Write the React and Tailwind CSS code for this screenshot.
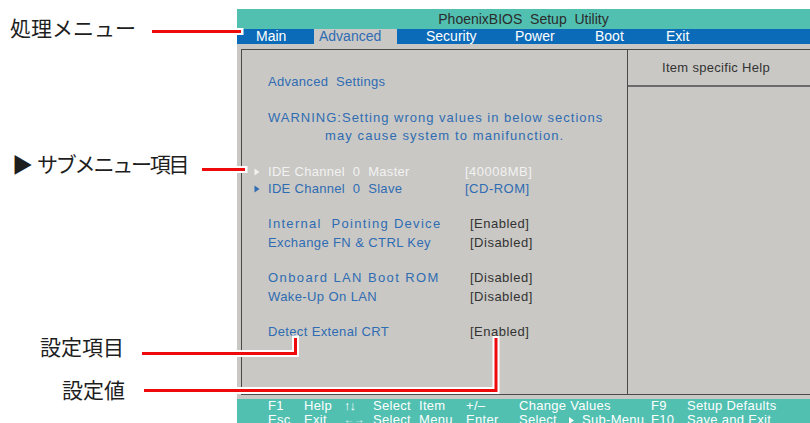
import React from 'react';

// Row in the Advanced settings list: marker column, label column, value
function Row({ className, marker, label, value, labelClass, valueClass }) {
  return (
    <div className={`flex ${className}`}>
      <span className="w-[14px] shrink-0 flex items-center">{marker}</span>
      <span className={labelClass}>{label}</span>
      <span className={valueClass}>{value}</span>
    </div>
  );
}

function Tri({ color }) {
  return (
    <svg width="6" height="8" viewBox="0 0 6 8">
      <polygon points="0.5,0.5 5.5,4 0.5,7.5" fill={color} />
    </svg>
  );
}

function Callouts() {
  return (
    <svg className="absolute inset-0 pointer-events-none" width="810" height="423">
      {/* white halo under the red leader lines */}
      <g stroke="#ffffff" strokeWidth="7" fill="none" strokeLinecap="square" strokeLinejoin="miter">
        <polyline points="152,31.5 240,31.5" />
        <polyline points="202,169.5 244,169.5" />
        <polyline points="142,353.5 295.5,353.5 295.5,339" />
        <polyline points="144,390.5 496,390.5 496,339.5" />
      </g>
      <g stroke="#ee0a0a" strokeWidth="3" fill="none" strokeLinejoin="miter">
        <polyline points="152,31.5 241,31.5" />
        <polyline points="202,169.5 245,169.5" />
        <polyline points="142,353.5 295.5,353.5 295.5,338" />
        <polyline points="144,390.5 496,390.5 496,338" />
      </g>
    </svg>
  );
}

export default function App() {
  const blue = 'text-[#2f6cb3]';

  return (
    <div className="relative w-[810px] h-[423px] overflow-hidden bg-white font-['Liberation_Sans',Arial,sans-serif]">
      <div className="flex h-full">
        {/* left column holds the annotation labels */}
        <div className="w-[237px] shrink-0" />

        {/* BIOS screen */}
        <div className="flex-1 pt-[9px] flex flex-col min-w-0">
          <div className="h-[20px] bg-[#51c0b1] text-[#2b2b2b] text-[14px] leading-[20px] text-center whitespace-pre">
            PhoenixBIOS  Setup  Utility
          </div>

          <div className="h-[15px] bg-[#0b6bb8] flex text-[14px] leading-[15px] text-white pl-[19px]">
            <span className="w-[58px]">Main</span>
            <span className="w-[83px] pl-[5px] bg-[#c9c8c4] text-[#2f6cb3]">Advanced</span>
            <span className="w-[89px] ml-[29px]">Security</span>
            <span className="w-[80px]">Power</span>
            <span className="w-[71px]">Boot</span>
            <span>Exit</span>
          </div>

          <div className="h-[355px] bg-[#c9c8c4] pt-[5px] pl-[4px] pb-[4px] flex">
            <div className="flex-1 flex border-l border-t border-b border-[#4a4a4a]">
              {/* main settings */}
              <div className="w-[386px] shrink-0 border-r border-[#4a4a4a] pl-[12px] pt-[23px] text-[13px] whitespace-pre">
                <Row
                  className="leading-[18px]"
                  label="Advanced  Settings"
                  labelClass={`${blue} tracking-[0.3px]`}
                />
                <div className={`mt-[18px] pl-[14px] leading-[18px] tracking-[1px] ${blue}`}>
                  WARNING:Setting wrong values in below sections
                </div>
                <div className={`pl-[71px] leading-[18px] tracking-[1.1px] ${blue}`}>
                  may cause system to manifunction.
                </div>

                <Row
                  className="mt-[18px] leading-[17px]"
                  marker={<Tri color="#f2f2f2" />}
                  label="IDE Channel  0  Master"
                  labelClass="w-[197px] text-[#f2f2f2] tracking-[0.3px]"
                  value="[40008MB]"
                  valueClass="text-[#f2f2f2] tracking-[0.5px]"
                />
                <Row
                  className="leading-[17px]"
                  marker={<Tri color="#2f6cb3" />}
                  label="IDE Channel  0  Slave"
                  labelClass={`w-[197px] ${blue} tracking-[0.3px]`}
                  value="[CD-ROM]"
                  valueClass={`${blue} tracking-[0.5px]`}
                />

                <Row
                  className="mt-[17px] leading-[19px]"
                  label="Internal  Pointing Device"
                  labelClass={`w-[202px] ${blue} tracking-[1.3px]`}
                  value="[Enabled]"
                  valueClass="text-[#333333] tracking-[0.5px]"
                />
                <Row
                  className="leading-[19px]"
                  label="Exchange FN & CTRL Key"
                  labelClass={`w-[202px] ${blue} tracking-[0.4px]`}
                  value="[Disabled]"
                  valueClass="text-[#333333] tracking-[0.5px]"
                />

                <Row
                  className="mt-[16px] leading-[19px]"
                  label="Onboard LAN Boot ROM"
                  labelClass={`w-[202px] ${blue} tracking-[1.4px]`}
                  value="[Disabled]"
                  valueClass="text-[#333333] tracking-[0.5px]"
                />
                <Row
                  className="leading-[19px]"
                  label="Wake-Up On LAN"
                  labelClass={`w-[202px] ${blue} tracking-[0.4px]`}
                  value="[Disabled]"
                  valueClass="text-[#333333] tracking-[0.5px]"
                />

                <Row
                  className="mt-[17px] leading-[18px]"
                  label="Detect Extenal CRT"
                  labelClass={`w-[202px] ${blue} tracking-[0.35px]`}
                  value="[Enabled]"
                  valueClass="text-[#333333] tracking-[0.5px]"
                />
              </div>

              {/* help pane */}
              <div className="flex-1 flex flex-col">
                <div className="h-[37px] border-b-2 border-[#6b6b6b] flex items-center justify-center pr-[6px] text-[13px] tracking-[0.3px] text-[#333333]">
                  Item specific Help
                </div>
              </div>
            </div>
          </div>

          <div className="h-[24px] bg-[#51c0b1] overflow-hidden text-white text-[13px] leading-[14px] tracking-[0.3px] whitespace-nowrap">
            <div className="grid grid-cols-[36px_40px_29px_46px_47px_53px_132px_36px_1fr] pl-[31px]">
              <span>F1</span>
              <span>Help</span>
              <span className="font-bold text-[13px] tracking-[-1px]">↑↓</span>
              <span>Select</span>
              <span>Item</span>
              <span>+/–</span>
              <span>Change Values</span>
              <span>F9</span>
              <span>Setup Defaults</span>

              <span>Esc</span>
              <span>Exit</span>
              <span className="font-bold text-[10px]">←→</span>
              <span>Select</span>
              <span>Menu</span>
              <span>Enter</span>
              <span className="flex items-center">
                <span className="w-[50px]">Select</span>
                <span className="w-[13px] flex items-center">
                  <svg width="5" height="7" viewBox="0 0 5 7">
                    <polygon points="0,0 5,3.5 0,7" fill="#ffffff" />
                  </svg>
                </span>
                <span>Sub-Menu</span>
              </span>
              <span>F10</span>
              <span>Save and Exit</span>
            </div>
          </div>
        </div>
      </div>

      {/* annotation labels and leader lines */}
      <Callouts />
      <div className="absolute left-[10px] top-[17px] text-[21px] leading-none text-[#1e1e1e] font-['Noto_Sans_CJK_JP',sans-serif]">
        処理メニュー
      </div>
      <div className="absolute left-[12px] top-[153px] flex text-[21px] leading-none text-[#1e1e1e] font-['Noto_Sans_CJK_JP',sans-serif]">
        <span className="mr-[4px]">▶</span>
        <span className="tracking-[-2.2px]">サブメニュー項目</span>
      </div>
      <div className="absolute left-[40px] top-[336px] text-[21px] leading-none text-[#1e1e1e] font-['Noto_Sans_CJK_JP',sans-serif]">
        設定項目
      </div>
      <div className="absolute left-[62px] top-[379px] text-[21px] leading-none text-[#1e1e1e] font-['Noto_Sans_CJK_JP',sans-serif]">
        設定値
      </div>
    </div>
  );
}
